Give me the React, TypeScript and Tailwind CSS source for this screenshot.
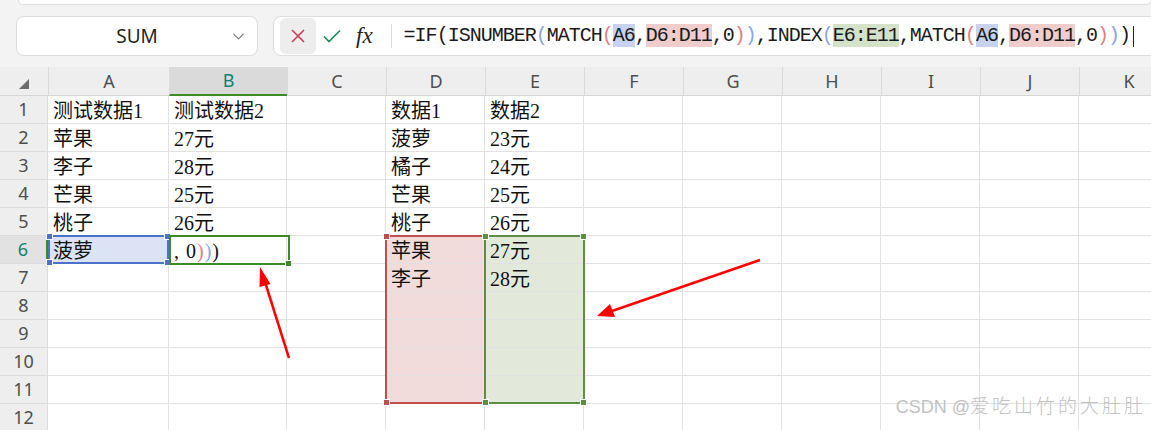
import { ChevronDown } from 'lucide-react';

type Tone = 'none' | 'blue' | 'pink' | 'green';

const cols = ['A', 'B', 'C', 'D', 'E', 'F', 'G', 'H', 'I', 'J', 'K'];

const data: string[][] = [
  ['测试数据1', '测试数据2', '', '数据1', '数据2'],
  ['苹果', '27元', '', '菠萝', '23元'],
  ['李子', '28元', '', '橘子', '24元'],
  ['芒果', '25元', '', '芒果', '25元'],
  ['桃子', '26元', '', '桃子', '26元'],
  ['菠萝', '', '', '苹果', '27元'],
  ['', '', '', '李子', '28元'],
  [],
  [],
  [],
  [],
  [],
];

const toneOf = (row: number, col: number): Tone => {
  if (row === 6 && col === 0) return 'blue';
  if (row >= 6 && row <= 11 && col === 3) return 'pink';
  if (row >= 6 && row <= 11 && col === 4) return 'green';
  return 'none';
};

const toneClass: Record<Tone, string> = {
  none: 'bg-white',
  blue: 'bg-[#dce3f4]',
  pink: 'bg-[#f2dcdb]',
  green: 'bg-[#e2e9da]',
};

const Handle = ({ className }: { className: string }) => (
  <span className={`absolute h-[7px] w-[7px] border border-white ${className}`} />
);

const FormulaText = () => (
  <span className="whitespace-pre text-[#1a1a1a]">
    =IF<span>(</span>ISNUMBER<span className="text-[#8ea4e4]">(</span>MATCH
    <span className="text-[#e27d84]">(</span>
    <span className="bg-[#c7d2ee]">A6</span>,<span className="bg-[#f0cdcd]">D6:D11</span>,0
    <span className="text-[#e27d84]">)</span>
    <span className="text-[#8ea4e4]">)</span>,INDEX<span className="text-[#8ea4e4]">(</span>
    <span className="bg-[#d4e2c9]">E6:E11</span>,MATCH<span className="text-[#e27d84]">(</span>
    <span className="bg-[#c7d2ee]">A6</span>,<span className="bg-[#f0cdcd]">D6:D11</span>,0
    <span className="text-[#e27d84]">)</span>
    <span className="text-[#8ea4e4]">)</span>)
  </span>
);

export default function App() {
  return (
    <div className="relative h-[430px] w-[1151px] overflow-hidden bg-[#f3f3f3] font-['Noto_Sans',sans-serif]">
      <div className="ml-[18px] h-[5px] rounded-b-lg border-x border-b border-[#dedede] bg-white" />

      {/* name box + formula bar */}
      <div className="mt-[11px] flex h-[40px] items-stretch gap-[15px] pl-[16px]">
        <div className="relative flex w-[242px] items-center justify-center rounded-lg border border-[#dcdcdc] bg-white">
          <span className="text-[19px] text-[#222]">SUM</span>
          <ChevronDown className="absolute right-[9px] h-[19px] w-[19px] text-[#777]" strokeWidth={1.5} />
        </div>
        <div className="-mr-[12px] flex flex-1 items-center rounded-l-lg border border-[#dcdcdc] bg-white pl-[6px]">
          <div className="flex h-[36px] w-[36px] items-center justify-center rounded-md bg-[#ededed]">
            <svg width="16" height="16" viewBox="0 0 16 16">
              <path d="M2 2L14 14M14 2L2 14" stroke="#d23a55" strokeWidth="1.6" fill="none" />
            </svg>
          </div>
          <svg className="ml-[6px]" width="20" height="16" viewBox="0 0 20 16">
            <path d="M2 8.5L7 13.5L18 2.5" stroke="#1d8a5c" strokeWidth="1.7" fill="none" />
          </svg>
          <span className="ml-[14px] font-['Liberation_Serif',serif] text-[23px] italic text-[#222]">
            fx
          </span>
          <div className="ml-[18px] h-[24px] w-px bg-[#dadada]" />
          <div className="ml-[12px] flex items-center font-['Liberation_Mono',monospace] text-[20px] leading-[22px] tracking-[-1px]">
            <FormulaText />
            <span className="ml-[3px] h-[21px] w-[1.5px] bg-[#222]" />
          </div>
        </div>
      </div>

      {/* sheet */}
      <div className="mt-[11px]">
        <div className="grid h-[29px] grid-cols-[48px_121px_118px_repeat(9,99px)] border-b border-[#d6d6d6] bg-[#eeeeee] text-[18px] text-[#4e4e4e]">
          <div className="flex items-end justify-start pb-[7px] pl-[19px]">
            <svg width="10" height="10" viewBox="0 0 10 10">
              <path d="M10 0L10 10L0 10Z" fill="#6b6b6b" />
            </svg>
          </div>
          {cols.map((c) => (
            <div
              key={c}
              className={
                c === 'B'
                  ? 'flex items-center justify-center border-b-2 border-l border-b-[#3d8b27] border-l-[#dadada] bg-[#dadada] text-[#12806e]'
                  : 'flex items-center justify-center border-l border-[#dadada]'
              }
            >
              {c}
            </div>
          ))}
        </div>

        <div className="relative">
          {data.map((row, r) => {
            const rn = r + 1;
            return (
              <div key={rn} className="grid h-[28px] grid-cols-[48px_121px_118px_repeat(9,99px)]">
                <div
                  className={
                    rn === 6
                      ? 'flex items-center justify-center border-b border-r-2 border-b-[#dcdcdc] border-r-[#3d8b27] bg-[#e2e2e2] text-[18px] text-[#12806e]'
                      : 'flex items-center justify-center border-b border-r border-[#dcdcdc] bg-[#eeeeee] text-[18px] text-[#4e4e4e]'
                  }
                >
                  {rn}
                </div>
                {cols.map((c, ci) => (
                  <div
                    key={c}
                    className={`overflow-hidden whitespace-nowrap border-b border-r border-[#e1e1e1] pl-[5px] pt-[2px] font-['Liberation_Serif','Noto_Sans_CJK_SC',serif] text-[20px] leading-[26px] text-[#111] ${toneClass[toneOf(rn, ci)]}`}
                  >
                    {rn === 6 && ci === 1 ? (
                      <span className="tracking-[1px]">
                        , 0<span className="text-[#e27d84]">)</span>
                        <span className="text-[#8ea4e4]">)</span>)
                      </span>
                    ) : (
                      row[ci] ?? ''
                    )}
                  </div>
                ))}
              </div>
            );
          })}

          {/* selection frames */}
          <div className="absolute left-[48px] top-[139px] h-[29px] w-[121px] border-2 border-[#4a72c8]">
            <Handle className="-left-[4px] -top-[4px] bg-[#4a72c8]" />
            <Handle className="-right-[4px] -top-[4px] bg-[#4a72c8]" />
            <Handle className="-bottom-[4px] -left-[4px] bg-[#4a72c8]" />
            <Handle className="-bottom-[4px] -right-[4px] bg-[#4a72c8]" />
          </div>
          <div className="absolute left-[169px] top-[139px] h-[30px] w-[121px] border-2 border-[#3d8b27]">
            <Handle className="-bottom-[4px] -right-[4px] bg-[#3d8b27]" />
          </div>
          <div className="absolute left-[385px] top-[139px] h-[169px] w-[101px] border-2 border-[#c0504d]">
            <Handle className="-left-[4px] -top-[4px] bg-[#c0504d]" />
            <Handle className="-bottom-[4px] -left-[4px] bg-[#c0504d]" />
          </div>
          <div className="absolute left-[484px] top-[139px] h-[169px] w-[101px] border-2 border-[#5e8e45]">
            <Handle className="-left-[4px] -top-[4px] bg-[#5e8e45]" />
            <Handle className="-right-[4px] -top-[4px] bg-[#5e8e45]" />
            <Handle className="-bottom-[4px] -left-[4px] bg-[#5e8e45]" />
            <Handle className="-bottom-[4px] -right-[4px] bg-[#5e8e45]" />
          </div>
        </div>
      </div>

      {/* annotation arrows */}
      <svg className="pointer-events-none absolute left-0 top-0" width="1151" height="430">
        <line x1="289" y1="358" x2="265" y2="282" stroke="#ff0000" strokeWidth="2.5" />
        <path d="M260 267L270.5 284L259.5 287Z" fill="#ff0000" />
        <line x1="760" y1="260" x2="612" y2="311" stroke="#ff0000" strokeWidth="2.5" />
        <path d="M597 316L610 304L615 317Z" fill="#ff0000" />
      </svg>

      <div className="pointer-events-none absolute bottom-[9px] right-[5px] font-['Liberation_Sans','Noto_Sans_CJK_SC',sans-serif] text-[18px] font-light text-[#c2c2c2]">
        CSDN @<span className="text-[19px] tracking-[3px]">爱吃山竹的大肚肚</span>
      </div>
    </div>
  );
}
